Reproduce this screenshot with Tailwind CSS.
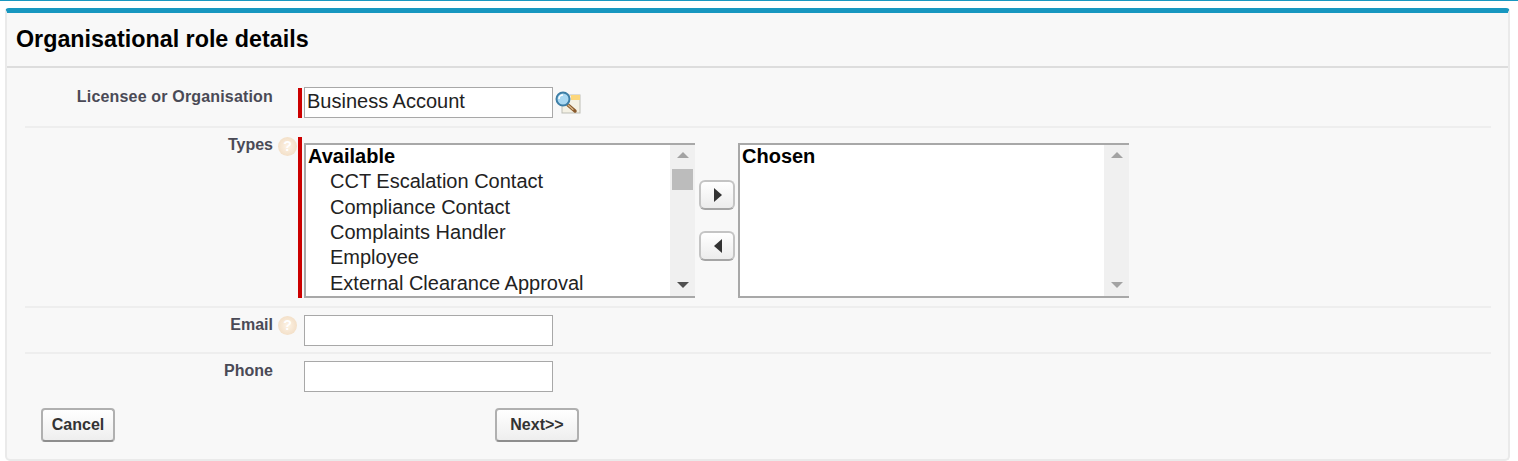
<!DOCTYPE html>
<html lang="en">
<head>
    <meta charset="UTF-8">
    <title>Organisational role details</title>
    <script src="https://cdn.jsdelivr.net/npm/@tailwindcss/browser@4"></script>
</head>
<body class="bg-white h-[461px] overflow-hidden font-['Liberation_Sans',Arial,sans-serif]">
    <div class="h-px bg-[#1797c0]"></div>

    <div class="mt-[7px] ml-[5px] w-[1505px] h-[453px] bg-[#f8f8f8] border-x-2 border-b-2 border-[#eaeaea] rounded-b-[5px] rounded-t-[4px] border-t-[5px] border-t-[#1797c0]">
        <!-- header -->
        <div class="h-[55px] border-b-2 border-[#dddddd] pl-[9px] pt-[12px]">
            <h2 class="text-[23.3px] leading-[28px] font-bold text-black">Organisational role details</h2>
        </div>

        <div class="mx-[18px] w-[1466px] text-[16px] font-bold text-[#4a4a56]">
            <!-- licensee -->
            <div class="flex h-[60px] border-b-2 border-[#eeeeee]">
                <div class="w-[248px] pt-[19px] text-right leading-[19px] tracking-[0.17px]">Licensee or Organisation</div>
                <div class="w-[25px]"></div>
                <div class="w-[4px] h-[30px] mt-[20px] bg-[#cc0000]"></div>
                <input type="text" value="Business Account" class="ml-[2px] mt-[19px] w-[249px] h-[31px] bg-white border border-[#a8a8a8] px-[2px] pb-[2px] text-[20px] font-normal text-[#222222] outline-none">
                <svg class="ml-[2px] mt-[23px]" width="27" height="24" viewBox="0 0 27 24">
                    <rect x="7" y="4" width="18" height="18" fill="#f4f1e4" stroke="#bdbdb5"/>
                    <rect x="16" y="4" width="9" height="5" fill="#fcd77c"/>
                    <path d="M13 14 L20 20" stroke="#8a5a2c" stroke-width="3.5" stroke-linecap="round"/>
                    <path d="M13 14 L18 18.5" stroke="#d9b98a" stroke-width="1.2" stroke-linecap="round"/>
                    <circle cx="8" cy="8" r="6.5" fill="#a9d8f2" stroke="#3d7ea6" stroke-width="2"/>
                    <path d="M4 8 a4 4 0 0 1 4 -4" fill="none" stroke="#ffffff" stroke-width="1.5"/>
                </svg>
            </div>

            <!-- types -->
            <div class="flex h-[180px] border-b-2 border-[#eeeeee]">
                <div class="w-[248px] pt-[7px] text-right leading-[19px]">Types</div>
                <div class="w-[25px] pt-[9px] pl-[5px]">
                    <div class="w-[19px] h-[19px] rounded-full bg-radial from-[#fdf3e6] to-[#efd8bc] text-white text-[14px] leading-[19px] text-center">?</div>
                </div>
                <div class="w-[4px] h-[161px] mt-[9px] bg-[#cc0000]"></div>
                <div class="ml-[2px] mt-[15px] w-[391px] h-[155px] flex bg-white border-y-2 border-l-2 border-[#a8a8a8] text-[20px] text-[#222222]">
                    <div class="flex-1 overflow-hidden pl-[2px] -mt-[1.3px] leading-[25.4px] font-normal">
                        <div class="font-bold text-black">Available</div>
                        <div class="pl-[22px]">CCT Escalation Contact</div>
                        <div class="pl-[22px]">Compliance Contact</div>
                        <div class="pl-[22px]">Complaints Handler</div>
                        <div class="pl-[22px]">Employee</div>
                        <div class="pl-[22px]">External Clearance Approval</div>
                    </div>
                    <div class="w-[25px] bg-[#f0f0f0] flex flex-col items-center pt-[7px]">
                        <div class="w-0 h-0 border-x-[6px] border-x-transparent border-b-[6px] border-b-[#a3a3a3]"></div>
                        <div class="w-[21px] h-[21px] mt-[11px] bg-[#bcbcbc]"></div>
                        <div class="w-0 h-0 mt-auto mb-[8px] border-x-[6px] border-x-transparent border-t-[6px] border-t-[#505050]"></div>
                    </div>
                </div>
                <div class="w-[43px] pt-[52px] pl-[4px]">
                    <button class="block w-[36px] h-[30px] rounded-[6px] border-2 border-[#c4c4c4] border-b-[#a5a5a5] bg-gradient-to-b from-white to-[#ececec]">
                        <span class="block ml-[13px] w-0 h-0 border-y-[7px] border-y-transparent border-l-[8px] border-l-[#333333]"></span>
                    </button>
                    <button class="block mt-[21px] w-[36px] h-[30px] rounded-[6px] border-2 border-[#c4c4c4] border-b-[#a5a5a5] bg-gradient-to-b from-white to-[#ececec]">
                        <span class="block ml-[13px] w-0 h-0 border-y-[7px] border-y-transparent border-r-[8px] border-r-[#333333]"></span>
                    </button>
                </div>
                <div class="mt-[15px] w-[391px] h-[155px] flex bg-white border-y-2 border-l-2 border-[#a8a8a8] text-[20px]">
                    <div class="flex-1 pl-[2px] -mt-[1.3px] leading-[25.4px] font-bold text-black">Chosen</div>
                    <div class="w-[25px] bg-[#f0f0f0] flex flex-col items-center pt-[7px]">
                        <div class="w-0 h-0 border-x-[6px] border-x-transparent border-b-[6px] border-b-[#a3a3a3]"></div>
                        <div class="w-0 h-0 mt-auto mb-[8px] border-x-[6px] border-x-transparent border-t-[6px] border-t-[#a3a3a3]"></div>
                    </div>
                </div>
            </div>

            <!-- email -->
            <div class="flex h-[46px] border-b-2 border-[#eeeeee]">
                <div class="w-[248px] pt-[7px] text-right leading-[19px]">Email</div>
                <div class="w-[25px] pt-[8px] pl-[5px]">
                    <div class="w-[19px] h-[19px] rounded-full bg-radial from-[#fdf3e6] to-[#efd8bc] text-white text-[14px] leading-[19px] text-center">?</div>
                </div>
                <input type="text" class="ml-[6px] mt-[7px] w-[249px] h-[31px] bg-white border border-[#a8a8a8] outline-none">
            </div>

            <!-- phone -->
            <div class="flex h-[45px]">
                <div class="w-[248px] pt-[7px] text-right leading-[19px]">Phone</div>
                <div class="w-[25px]"></div>
                <input type="text" class="ml-[6px] mt-[7px] w-[249px] h-[31px] bg-white border border-[#a8a8a8] outline-none">
            </div>
        </div>

        <!-- buttons -->
        <div class="flex mt-[9px] ml-[34px] text-[16px] font-bold text-[#333333]">
            <button class="w-[74px] h-[34px] rounded-[4px] border-2 border-[#b0b0b0] border-b-[#8e8e8e] bg-gradient-to-b from-white to-[#eeeeee]">Cancel</button>
            <button class="ml-[380px] w-[84px] h-[34px] rounded-[4px] border-2 border-[#b0b0b0] border-b-[#8e8e8e] bg-gradient-to-b from-white to-[#eeeeee]">Next&gt;&gt;</button>
        </div>
    </div>
</body>
</html>
